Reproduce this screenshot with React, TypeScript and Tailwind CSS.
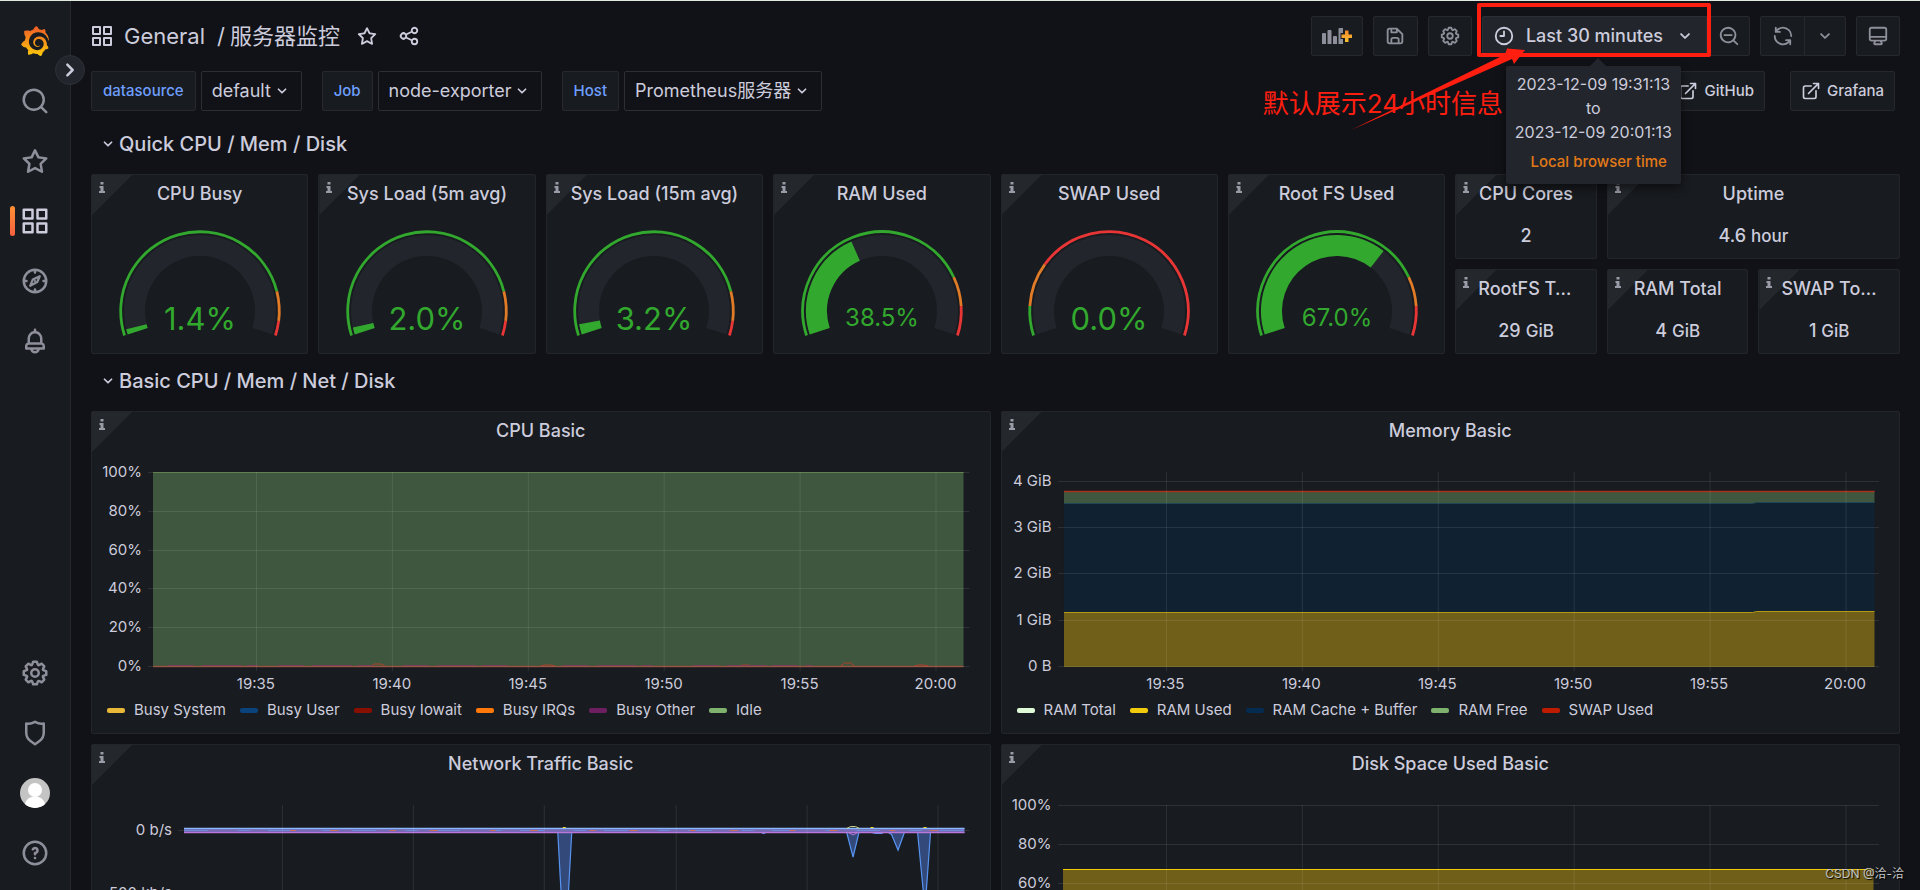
import type { ReactNode } from 'react'
import { SiGrafana } from 'react-icons/si'

/* ── Icon paths (24x24) ─── */
const ICONS = {
  apps: 'M10,13H3a1,1,0,0,0-1,1v7a1,1,0,0,0,1,1h7a1,1,0,0,0,1-1V14A1,1,0,0,0,10,13ZM9,20H4V15H9ZM21,2H14a1,1,0,0,0-1,1v7a1,1,0,0,0,1,1h7a1,1,0,0,0,1-1V3A1,1,0,0,0,21,2ZM20,9H15V4h5Zm1,4H14a1,1,0,0,0-1,1v7a1,1,0,0,0,1,1h7a1,1,0,0,0,1-1V14A1,1,0,0,0,21,13Zm-1,7H15V15h5ZM10,2H3A1,1,0,0,0,2,3v7a1,1,0,0,0,1,1h7a1,1,0,0,0,1-1V3A1,1,0,0,0,10,2ZM9,9H4V4H9Z',
  search: 'M21.71,20.29,18,16.61A9,9,0,1,0,16.61,18l3.68,3.68a1,1,0,0,0,1.42,0A1,1,0,0,0,21.71,20.29ZM11,18a7,7,0,1,1,7-7A7,7,0,0,1,11,18Z',
  star: 'M22,9.67A1,1,0,0,0,21.14,9l-5.69-.83L12.9,3a1,1,0,0,0-1.8,0L8.55,8.16,2.86,9a1,1,0,0,0-.81.68,1,1,0,0,0,.25,1l4.13,4-1,5.68A1,1,0,0,0,6.9,21.44L12,18.77l5.1,2.67a.93.93,0,0,0,.46.12,1,1,0,0,0,.59-.19,1,1,0,0,0,.4-1l-1-5.68,4.13-4A1,1,0,0,0,22,9.67Zm-6.15,4a1,1,0,0,0-.29.88l.72,4.2-3.76-2a1.06,1.06,0,0,0-.94,0l-3.76,2,.72-4.2a1,1,0,0,0-.29-.88l-3-3,4.21-.61a1,1,0,0,0,.76-.55L12,5.7l1.88,3.82a1,1,0,0,0,.76.55l4.21.61Z',
  bell: 'M18,13.18V10a6,6,0,0,0-5-5.91V3a1,1,0,0,0-2,0V4.09A6,6,0,0,0,6,10v3.18A3,3,0,0,0,4,16v2a1,1,0,0,0,1,1H8.14a4,4,0,0,0,7.72,0H19a1,1,0,0,0,1-1V16A3,3,0,0,0,18,13.18ZM8,10a4,4,0,0,1,8,0v3H8Zm4,10a2,2,0,0,1-1.72-1h3.44A2,2,0,0,1,12,20Zm6-3H6V16a1,1,0,0,1,1-1H17a1,1,0,0,1,1,1Z',
  cog: 'M21.32,9.55l-1.89-.63.89-1.78A1,1,0,0,0,20.13,6L18,3.87a1,1,0,0,0-1.15-.19l-1.78.89-.63-1.89A1,1,0,0,0,13.5,2h-3a1,1,0,0,0-.95.68L8.92,4.57,7.14,3.68A1,1,0,0,0,6,3.87L3.87,6a1,1,0,0,0-.19,1.15l.89,1.78-1.89.63A1,1,0,0,0,2,10.5v3a1,1,0,0,0,.68.95l1.89.63-.89,1.78A1,1,0,0,0,3.87,18L6,20.13a1,1,0,0,0,1.15.19l1.78-.89.63,1.89a1,1,0,0,0,.95.68h3a1,1,0,0,0,.95-.68l.63-1.89,1.78.89A1,1,0,0,0,18,20.13L20.13,18a1,1,0,0,0,.19-1.15l-.89-1.78,1.89-.63A1,1,0,0,0,22,13.5v-3A1,1,0,0,0,21.32,9.55ZM20,12.78l-1.2.4A2,2,0,0,0,17.64,16l.57,1.14-1.1,1.1L16,17.64a2,2,0,0,0-2.79,1.16l-.4,1.2H11.22l-.4-1.2A2,2,0,0,0,8,17.64l-1.14.57-1.1-1.1L6.36,16A2,2,0,0,0,5.2,13.18L4,12.78V11.22l1.2-.4A2,2,0,0,0,6.36,8L5.79,6.89l1.1-1.1L8,6.36A2,2,0,0,0,10.82,5.2l.4-1.2h1.56l.4,1.2A2,2,0,0,0,16,6.36l1.14-.57,1.1,1.1L17.64,8a2,2,0,0,0,1.16,2.79l1.2.4ZM12,8a4,4,0,1,0,4,4A4,4,0,0,0,12,8Zm0,6a2,2,0,1,1,2-2A2,2,0,0,1,12,14Z',
  shield: 'M19.63,3.65a1,1,0,0,0-.84-.2,8,8,0,0,1-6.22-1.27,1,1,0,0,0-1.14,0A8,8,0,0,1,5.21,3.45a1,1,0,0,0-.84.2A1,1,0,0,0,4,4.43v7.45a9,9,0,0,0,3.77,7.33l3.65,2.6a1,1,0,0,0,1.16,0l3.65-2.6A9,9,0,0,0,20,11.88V4.43A1,1,0,0,0,19.63,3.65ZM18,11.88a7,7,0,0,1-2.93,5.7L12,19.77,8.93,17.58A7,7,0,0,1,6,11.88V5.58a10,10,0,0,0,6-1.39,10,10,0,0,0,6,1.39Z',
  help: 'M11.29,15.29a1.58,1.58,0,0,0-.12.15.76.76,0,0,0-.09.18.64.64,0,0,0-.06.18,1.36,1.36,0,0,0,0,.2.84.84,0,0,0,.08.38.9.9,0,0,0,.54.54.94.94,0,0,0,.76,0,.9.9,0,0,0,.54-.54A1,1,0,0,0,13,16a1,1,0,0,0-.29-.71A1,1,0,0,0,11.29,15.29ZM12,2A10,10,0,1,0,22,12,10,10,0,0,0,12,2Zm0,18a8,8,0,1,1,8-8A8,8,0,0,1,12,20ZM12,7A3,3,0,0,0,9.4,8.5a1,1,0,1,0,1.73,1A1,1,0,0,1,12,9a1,1,0,0,1,0,2,1,1,0,0,0-1,1v1a1,1,0,0,0,2,0v-.18A3,3,0,0,0,12,7Z',
  share: 'M18,14a4,4,0,0,0-3.08,1.48l-5.1-2.35a3.64,3.64,0,0,0,0-2.26l5.1-2.35A4,4,0,1,0,14,6a4.17,4.17,0,0,0,.07.71L8.79,9.14a4,4,0,1,0,0,5.72l5.28,2.43A4.17,4.17,0,0,0,14,18a4,4,0,1,0,4-4ZM18,4a2,2,0,1,1-2,2A2,2,0,0,1,18,4ZM6,14a2,2,0,1,1,2-2A2,2,0,0,1,6,14Zm12,6a2,2,0,1,1,2-2A2,2,0,0,1,18,20Z',
  save: 'M20.71,9.29l-6-6a1,1,0,0,0-.32-.21A1.09,1.09,0,0,0,14,3H6A3,3,0,0,0,3,6V18a3,3,0,0,0,3,3H18a3,3,0,0,0,3-3V10A1,1,0,0,0,20.71,9.29ZM9,5h4V7H9Zm6,14H9V16a1,1,0,0,1,1-1h4a1,1,0,0,1,1,1Zm4-1a1,1,0,0,1-1,1H17V16a3,3,0,0,0-3-3H10a3,3,0,0,0-3,3v3H6a1,1,0,0,1-1-1V6A1,1,0,0,1,6,5H7V8A1,1,0,0,0,8,9h6a1,1,0,0,0,1-1V6.41l4,4Z',
  clock: 'M12,2A10,10,0,1,0,22,12,10,10,0,0,0,12,2Zm0,18a8,8,0,1,1,8-8A8,8,0,0,1,12,20ZM12,6a1,1,0,0,0-1,1v4H8a1,1,0,0,0,0,2h4a1,1,0,0,0,1-1V7A1,1,0,0,0,12,6Z',
  down: 'M17,9.17a1,1,0,0,0-1.41,0L12,12.71,8.46,9.17a1,1,0,0,0-1.41,0,1,1,0,0,0,0,1.42l4.24,4.24a1,1,0,0,0,1.42,0L17,10.59A1,1,0,0,0,17,9.17Z',
  right: 'M14.83,11.29,10.59,7.05a1,1,0,0,0-1.42,0,1,1,0,0,0,0,1.41L12.71,12,9.17,15.54a1,1,0,0,0,0,1.41,1,1,0,0,0,.71.29,1,1,0,0,0,.71-.29l4.24-4.24A1,1,0,0,0,14.83,11.29Z',
  zoomOut: 'M21.71,20.29,18,16.61A9,9,0,1,0,16.61,18l3.68,3.68a1,1,0,0,0,1.42,0A1,1,0,0,0,21.71,20.29ZM11,18a7,7,0,1,1,7-7A7,7,0,0,1,11,18Zm4-8H7a1,1,0,0,0,0,2h8a1,1,0,0,0,0-2Z',
  sync: 'M19.91,15.51H15.38a1,1,0,0,0,0,2h2.4A8,8,0,0,1,4,12a1,1,0,0,0-2,0,10,10,0,0,0,16.88,7.23V21a1,1,0,0,0,2,0V16.5A1,1,0,0,0,19.91,15.51ZM12,2A10,10,0,0,0,5.12,4.77V3a1,1,0,0,0-2,0V7.5a1,1,0,0,0,1,1h4.5a1,1,0,0,0,0-2H6.22A8,8,0,0,1,20,12a1,1,0,0,0,2,0A10,10,0,0,0,12,2Z',
  monitor: 'M19,2H5A3,3,0,0,0,2,5V15a3,3,0,0,0,3,3H7.64l-.58,1a2,2,0,0,0,0,2,2,2,0,0,0,1.75,1h6.46A2,2,0,0,0,17,21a2,2,0,0,0,0-2l-.59-1H19a3,3,0,0,0,3-3V5A3,3,0,0,0,19,2ZM8.77,20,10,18H14l1.2,2ZM20,15a1,1,0,0,1-1,1H5a1,1,0,0,1-1-1V14H20Zm0-3H4V5A1,1,0,0,1,5,4H19a1,1,0,0,1,1,1Z',
  external: 'M18,10.82a1,1,0,0,0-1,1V19a1,1,0,0,1-1,1H5a1,1,0,0,1-1-1V8A1,1,0,0,1,5,7h7.18a1,1,0,0,0,0-2H5A3,3,0,0,0,2,8V19a3,3,0,0,0,3,3H16a3,3,0,0,0,3-3V11.82A1,1,0,0,0,18,10.82Zm3.92-8.2a1,1,0,0,0-.54-.54A1,1,0,0,0,21,2H15a1,1,0,0,0,0,2h3.59L8.29,14.29a1,1,0,0,0,0,1.42,1,1,0,0,0,1.42,0L20,5.41V9a1,1,0,0,0,2,0V3A1,1,0,0,0,21.92,2.62Z',
}

const GREEN = '#32a82e'
const ORANGE = '#e07b28'
const RED = '#e83636'
const GRID = 'rgba(225,235,225,0.11)'

function Icon({ name, className }: { name: keyof typeof ICONS; className: string }) {
  return (
    <svg viewBox="0 0 24 24" fill="currentColor" className={`shrink-0 ${className}`} aria-hidden="true">
      <path d={ICONS[name]} />
    </svg>
  )
}

function CompassIcon() {
  return (
    <svg viewBox="0 0 24 24" fill="none" stroke="currentColor" strokeWidth="2" strokeLinecap="round" strokeLinejoin="round" className="size-[30px]" aria-hidden="true">
      <circle cx="12" cy="12" r="9" />
      <path d="M12 3.5v1.7M12 18.8v1.7M3.5 12h1.7M18.8 12h1.7" />
      <path d="M15.8 8.2l-2 4.6-5.6 3 2-4.9z" strokeWidth="1.8" />
      <circle cx="12" cy="12" r="0.4" strokeWidth="1" />
    </svg>
  )
}

function AddPanelIcon() {
  return (
    <svg viewBox="0 0 30 20" className="h-5 w-[30px]" aria-hidden="true">
      <defs>
        <linearGradient id="plus" x1="0" y1="0" x2="0" y2="1">
          <stop offset="0" stopColor="#f58a2c" />
          <stop offset="1" stopColor="#fbc02d" />
        </linearGradient>
      </defs>
      <g fill="#8e8f9a">
        <path d="M0 8a1 1 0 0 1 1-1h2a1 1 0 0 1 1 1v10H0zM5.500 5a1 1 0 0 1 1-1h2a1 1 0 0 1 1 1v13h-4zM11 11a1 1 0 0 1 1-1h2a1 1 0 0 1 1 1v7h-4z" />
        <path d="M16.500 3a1 1 0 0 1 1-1H21v5h-2.500v6H21v5h-4.500z" />
      </g>
      <path d="M23 4.500h3.500v4H30v3.500h-3.500v4H23v-4h-3.500V8.500H23z" fill="url(#plus)" />
    </svg>
  )
}

/* ── Sidebar ─── */
function NavItem({ label, active, children }: { label: string; active?: boolean; children: ReactNode }) {
  return (
    <a
      href="#"
      aria-label={label}
      className={`relative flex h-[60px] items-center justify-center ${active ? 'text-[#ccccdc]' : 'text-[#8e8f9a]'}`}
    >
      {active && (
        <span className="absolute left-2.5 h-[30px] w-[5px] rounded-sm bg-linear-to-b from-[#ff9033] to-[#f55f3e]" />
      )}
      {children}
    </a>
  )
}

function Sidebar() {
  return (
    <nav className="relative z-10 flex w-[71px] shrink-0 flex-col justify-between border-r border-[#26282d] bg-[#181b1f] pt-2.5 pb-[7px]">
      <svg className="absolute size-0" aria-hidden="true">
        <linearGradient id="brand" x1="0" y1="0" x2="0" y2="1">
          <stop offset="0" stopColor="#f05a28" />
          <stop offset="1" stopColor="#fbca0a" />
        </linearGradient>
      </svg>
      <div>
        <NavItem label="Home">
          <SiGrafana fill="url(#brand)" className="size-[30px]" />
        </NavItem>
        <NavItem label="Search"><Icon name="search" className="size-[30px]" /></NavItem>
        <NavItem label="Starred"><Icon name="star" className="size-[30px]" /></NavItem>
        <NavItem label="Dashboards" active><Icon name="apps" className="size-[30px]" /></NavItem>
        <NavItem label="Explore"><CompassIcon /></NavItem>
        <NavItem label="Alerting"><Icon name="bell" className="size-[30px]" /></NavItem>
      </div>
      <div>
        <NavItem label="Configuration"><Icon name="cog" className="size-[30px]" /></NavItem>
        <NavItem label="Server admin"><Icon name="shield" className="size-[30px]" /></NavItem>
        <NavItem label="Profile">
          <svg viewBox="0 0 30 30" className="size-[30px] rounded-full" aria-hidden="true">
            <rect width="30" height="30" fill="#c4c4c4" />
            <circle cx="15" cy="12" r="7" fill="#fff" />
            <path d="M4 30c1-8 5-11.500 11-11.500S25 22 26 30z" fill="#fff" />
          </svg>
        </NavItem>
        <NavItem label="Help"><Icon name="help" className="size-[30px]" /></NavItem>
      </div>
      <button
        aria-label="Expand menu"
        className="absolute top-[54px] -right-[15px] flex size-[30px] items-center justify-center rounded-full border border-[#2d3036] bg-[#22252b] text-[#ccccdc]"
      >
        <Icon name="right" className="size-[30px]" />
      </button>
    </nav>
  )
}

/* ── Header ─── */
const TOOL = 'flex h-10 items-center justify-center border border-[#26282d] bg-[#181b1f] text-[#8e8f9a]'

function TimePicker() {
  return (
    <div className="relative z-20">
      <button className="flex h-10 items-center rounded-l-xs border border-[#2b2e34] bg-[#22252b] px-2.5 text-lg font-medium text-[#ccccdc]">
        <Icon name="clock" className="mr-[11px] size-[22px]" />
        Last 30 minutes
        <Icon name="down" className="ml-[11px] size-[22px]" />
      </button>

      {/* Range tooltip */}
      <div className="absolute top-[50px] left-6 h-[118px] w-[175px] rounded-xs bg-[#22252b] pt-1.5 text-center text-base leading-6 text-[#ccccdc] shadow-[0_4px_10px_rgba(0,0,0,0.5)]">
        <span className="absolute -top-2 left-[83px] size-0 border-x-[9px] border-b-[9px] border-x-transparent border-b-[#22252b]" />
        <div>2023-12-09 19:31:13</div>
        <div>to</div>
        <div>2023-12-09 20:01:13</div>
        <div className="mt-1.5 pr-3.5 text-right text-[15px] font-medium text-[#e27a18]">Local browser time</div>
      </div>

      {/* Red annotation */}
      <div className="pointer-events-none absolute -top-[13px] -right-1 -bottom-px -left-[5px] rounded-xs border-4 border-[#ff1e10]" />
      <p className="pointer-events-none absolute top-[68px] right-[204px] text-[26px] leading-10 whitespace-nowrap text-[#ff1e10]">
        默认展示24小时信息
      </p>
      <svg viewBox="0 0 174 82" className="pointer-events-none absolute top-8 -left-[131px] h-[82px] w-[174px]" aria-hidden="true">
        <path d="M0 82L154 6.500L156 0.500L174 2L163 16L161 11Z" fill="#ff1e10" />
      </svg>
    </div>
  )
}

function Header() {
  return (
    <header className="flex items-center justify-between pt-[15px] pr-5 pl-5">
      <div className="flex items-center text-[22px] text-[#ccccdc]">
        <Icon name="apps" className="mr-2.5 -ml-px size-6" />
        <a href="#">General</a>
        <span className="ml-3 mr-[5px]">/</span>
        <a href="#">服务器监控</a>
        <button aria-label="Mark as favorite" className="ml-4"><Icon name="star" className="size-[22px]" /></button>
        <button aria-label="Share dashboard" className="ml-5"><Icon name="share" className="size-[22px]" /></button>
      </div>
      <div className="flex items-center gap-2.5">
        <button aria-label="Add panel" className={`${TOOL} w-[52px] rounded-xs`}><AddPanelIcon /></button>
        <button aria-label="Save dashboard" className={`${TOOL} w-[45px] rounded-xs`}><Icon name="save" className="size-[22px]" /></button>
        <button aria-label="Dashboard settings" className={`${TOOL} w-11 rounded-xs`}><Icon name="cog" className="size-[22px]" /></button>
        <div className="flex">
          <TimePicker />
          <button aria-label="Zoom out" className={`${TOOL} w-[43px] rounded-r-xs`}><Icon name="zoomOut" className="size-[22px]" /></button>
        </div>
        <div className="flex">
          <button aria-label="Refresh" className={`${TOOL} w-[45px] rounded-l-xs`}><Icon name="sync" className="size-[22px]" /></button>
          <button aria-label="Refresh interval" className={`${TOOL} w-[41px] rounded-r-xs border-l-0`}><Icon name="down" className="size-[22px]" /></button>
        </div>
        <button aria-label="Cycle view mode" className={`${TOOL} w-11 rounded-xs`}><Icon name="monitor" className="size-[22px]" /></button>
      </div>
    </header>
  )
}

/* ── Variables ─── */
const VARIABLES = [
  { id: 'datasource', value: 'default' },
  { id: 'Job', value: 'node-exporter' },
  { id: 'Host', value: 'Prometheus服务器' },
]

function Variables() {
  return (
    <div className="flex justify-between pt-[15px] pr-[25px] pl-5">
      <div className="flex gap-5">
        {VARIABLES.map((v) => (
          <div key={v.id} className="flex gap-[5px]">
            <label
              htmlFor={v.id}
              className="flex h-10 items-center rounded-xs border border-[#26282d] bg-[#181b1f] px-[11px] text-[15px] font-medium text-[#6e9fff]"
            >
              {v.id}
            </label>
            <div className="relative text-[#ccccdc]">
              <select
                id={v.id}
                className="h-10 appearance-none rounded-xs border border-[#2d2e34] bg-[#111217] pr-[29px] pl-2.5 text-lg"
              >
                <option>{v.value}</option>
              </select>
              <Icon name="down" className="pointer-events-none absolute top-2.5 right-2.5 size-5" />
            </div>
          </div>
        ))}
      </div>
      <div className="flex gap-[25px] text-[15px] font-medium text-[#ccccdc]">
        {['GitHub', 'Grafana'].map((name) => (
          <a key={name} href="#" className="flex h-10 items-center gap-1.5 rounded-xs border border-[#26282d] bg-[#181b1f] px-2.5">
            <Icon name="external" className="size-5" />
            {name}
          </a>
        ))}
      </div>
    </div>
  )
}

/* ── Panel ─── */
function Panel({ title, className, children }: { title: string; className: string; children: ReactNode }) {
  return (
    <section className={`relative flex min-w-0 flex-col rounded-xs border border-[#222529] bg-[#181b1f] ${className}`}>
      <div className="absolute top-0 left-0 size-10 bg-[#24282d] text-[#9a9ba6] [clip-path:polygon(0_0,100%_0,0_100%)]">
        <svg viewBox="0 0 6 11" fill="currentColor" className="mt-[7px] ml-[7px] h-[11px] w-1.5" aria-hidden="true">
          <path d="M1.500 0h3v2.500h-3zM0.500 4h4v5H6v2H0V9h1.500V6h-1z" />
        </svg>
      </div>
      <h2 className="relative h-10 truncate px-[22px] text-center text-lg leading-[38px] font-medium text-[#ccccdc]">{title}</h2>
      {children}
    </section>
  )
}

function RowTitle({ children }: { children: ReactNode }) {
  return (
    <button className="flex h-[37px] items-center pb-[3px] pl-[7px] text-xl font-medium text-[#ccccdc]">
      <Icon name="down" className="mr-px size-5" />
      {children}
    </button>
  )
}

/* ── Gauge ─── */
type GaugeData = { title: string; value: number; warn: number; crit: number }

const GAUGES: GaugeData[] = [
  { title: 'CPU Busy', value: 1.4, warn: 85, crit: 95 },
  { title: 'Sys Load (5m avg)', value: 2, warn: 85, crit: 95 },
  { title: 'Sys Load (15m avg)', value: 3.2, warn: 85, crit: 95 },
  { title: 'RAM Used', value: 38.5, warn: 80, crit: 90 },
  { title: 'SWAP Used', value: 0, warn: 10, crit: 25 },
  { title: 'Root FS Used', value: 67, warn: 80, crit: 90 },
]

// The dial sweeps 216 degrees, starting 18 degrees below the horizontal
function arc(r: number, from: number, to: number): string {
  const point = (pct: number) => {
    const a = ((162 + pct * 2.16) * Math.PI) / 180
    return `${(82 + r * Math.cos(a)).toFixed(2)} ${(82 + r * Math.sin(a)).toFixed(2)}`
  }
  return `M${point(from)}A${r} ${r} 0 ${(to - from) * 2.16 > 180 ? 1 : 0} 1 ${point(to)}`
}

function Gauge({ value, warn, crit }: GaugeData) {
  const text = `${value.toFixed(1)}%`
  return (
    <div className="flex flex-1 items-center justify-center">
      <svg viewBox="0 0 164 110" className="h-[110px] w-[164px]" fill="none">
        <path d={arc(65.5, 0, 100)} stroke="#22252b" strokeWidth="21" />
        {value > 0 && <path d={arc(65.5, 0, value + 0.5)} stroke={GREEN} strokeWidth="21" />}
        <path d={arc(79.3, 0, warn)} stroke={GREEN} strokeWidth="2.8" />
        <path d={arc(79.3, warn, crit)} stroke={ORANGE} strokeWidth="2.8" />
        <path d={arc(79.3, crit, 100)} stroke={RED} strokeWidth="2.8" />
        <text
          x="82"
          y={text.length > 4 ? 97 : 101}
          fill={GREEN}
          textAnchor="middle"
          className={text.length > 4 ? 'text-2xl' : 'text-[31px]'}
        >
          {text}
        </text>
      </svg>
    </div>
  )
}

/* ── Stats ─── */
const STATS = [
  { title: 'CPU Cores', value: '2', unit: '', span: 'col-span-2' },
  { title: 'Uptime', value: '4.6', unit: 'hour', span: 'col-span-4' },
  { title: 'RootFS Total', value: '29', unit: 'GiB', span: 'col-span-2' },
  { title: 'RAM Total', value: '4', unit: 'GiB', span: 'col-span-2' },
  { title: 'SWAP Total', value: '1', unit: 'GiB', span: 'col-span-2' },
]

/* ── Charts ─── */
type Tick = { label: string; y: number }

const PLOT_H = 199

const TIME_TICKS = [
  { label: '19:35', x: 108 },
  { label: '19:40', x: 244 },
  { label: '19:45', x: 380 },
  { label: '19:50', x: 516 },
  { label: '19:55', x: 652 },
  { label: '20:00', x: 788 },
]

type ChartProps = {
  width: number
  yTicks: Tick[]
  xTicks: { label: string; x: number }[]
  wideAxis?: boolean
  children: ReactNode
}

function Chart({ width, yTicks, xTicks, wideAxis, children }: ChartProps) {
  return (
    <div className="mt-5 flex pr-5 text-[15px] leading-5 text-[#ccccdc]">
      <div className={`relative shrink-0 ${wideAxis ? 'w-[86px]' : 'w-14'}`}>
        {yTicks.map((t) => (
          <span key={t.label} className="absolute right-1.5 -mt-2.5 whitespace-nowrap" style={{ top: t.y }}>
            {t.label}
          </span>
        ))}
      </div>
      <div className="min-w-0 flex-1">
        <svg viewBox={`0 0 ${width} ${PLOT_H}`} preserveAspectRatio="none" className="block h-[199px] w-full">
          {children}
          <g stroke={GRID} shapeRendering="crispEdges">
            {yTicks.map((t) => (
              <path key={t.label} d={`M0 ${t.y + 0.5}H${width}`} />
            ))}
            {xTicks.map((t) => (
              <path key={t.x} d={`M${t.x + 0.5} 0V${PLOT_H}`} />
            ))}
          </g>
        </svg>
        <div className="relative h-[26px]">
          {xTicks.map((t) => (
            <span key={t.x} className="absolute top-[3px] -translate-x-1/2" style={{ left: `${(t.x / width) * 100}%` }}>
              {t.label}
            </span>
          ))}
        </div>
      </div>
    </div>
  )
}

function Legend({ items }: { items: [string, string][] }) {
  return (
    <ul className="flex h-[26px] items-center gap-3.5 pl-[15px] text-[15px] text-[#ccccdc]">
      {items.map(([label, color]) => (
        <li key={label} className="flex items-center gap-[9px]">
          <span className="h-[5px] w-[18px] rounded-xs" style={{ background: color }} />
          {label}
        </li>
      ))}
    </ul>
  )
}

function CpuChart() {
  const yTicks = [100, 80, 60, 40, 20, 0].map((p) => ({ label: `${p}%`, y: Math.round(194 - p * 1.94) }))
  const bumps = [[230, 2], [400, 1], [598, 1], [700, 3], [774, 1]]
  return (
    <Chart width={822} yTicks={yTicks} xTicks={TIME_TICKS}>
      <rect x="5" y="0" width="811" height="195" fill="#3e573e" />
      <path d="M5 0.500H816" stroke="#52753f" />
      <path d="M5 194.500H816" stroke="#8f4634" strokeWidth="1.500" />
      {bumps.map(([x, h]) => (
        <path key={x} d={`M${x - 7} 194L${x - 3} ${194 - h}H${x + 3}L${x + 7} 194`} stroke="#b0402c" fill="none" />
      ))}
      <path d="M20 193.500h90m20 0h95m30 0h110m50 0h90m40 0h120" stroke="#7a3f58" strokeDasharray="26 8 40 5" />
    </Chart>
  )
}

function MemoryChart() {
  const yTicks = [
    { label: '4 GiB', y: 9 },
    { label: '3 GiB', y: 55 },
    { label: '2 GiB', y: 101 },
    { label: '1 GiB', y: 148 },
    { label: '0 B', y: 194 },
  ]
  return (
    <Chart width={822} yTicks={yTicks} xTicks={TIME_TICKS}>
      <path d="M6 19H817V31H6Z" fill="#3e573e" />
      <path d="M6 31.500H695L699 30.500H817V140H6Z" fill="#102132" />
      <path d="M6 140.500H695L699 139.500H817V195H6Z" fill="#6f5f18" />
      <path d="M6 19.500H817" stroke="#a8321c" strokeWidth="1.500" />
      <path d="M6 31.500H695L699 30.500H817" stroke="#1d4656" fill="none" />
      <path d="M6 140.500H695L699 139.500H817" stroke="#b39a16" fill="none" />
    </Chart>
  )
}

function NetworkChart() {
  const xTicks = [104, 235, 366, 498, 629, 760].map((x) => ({ label: '', x }))
  return (
    <Chart width={792} wideAxis yTicks={[{ label: '0 b/s', y: 25 }, { label: '-500 kb/s', y: 88 }]} xTicks={xTicks}>
      <g fill="#33497a" stroke="#5794f2" strokeWidth="1.200">
        <path d="M380 27L387 155L394 27" />
        <path d="M669 27L675.500 52L681.500 27" />
        <path d="M692 27L698 28.500H704L707 27" />
        <path d="M710 27L714 29.500L720.500 45L727 27" />
        <path d="M740 27L747.500 104L753 27" />
        <path d="M583 27L586 28.500L589 27" />
      </g>
      <path d="M6 23H787V28H6Z" fill="#6a5fae" />
      <path d="M6 23.500H787" stroke="#8ab8ff" strokeWidth="1.500" />
      <path d="M6 25.500H787" stroke="#5d83d6" strokeDasharray="24 30 12 18" />
      <path d="M112 25.500H787" stroke="#c4664c" strokeDasharray="6 34 8 52" />
      <path d="M6 27.500H787" stroke="#b877d9" strokeWidth="1.300" />
      <path d="M669 23.500L673 21.500H678L682 23.500" stroke="#c5d08a" fill="none" />
      <path d="M385 22.500h3m305 0h3m50 0h3" stroke="#fade2a" />
      <path d="M670 27L675.500 30L681 27" stroke="#b877d9" fill="none" />
    </Chart>
  )
}

function DiskChart() {
  const yTicks = [
    { label: '100%', y: 0 },
    { label: '80%', y: 39 },
    { label: '60%', y: 78 },
  ]
  return (
    <Chart width={822} yTicks={yTicks} xTicks={TIME_TICKS.map((t) => ({ label: '', x: t.x }))}>
      <rect x="5" y="64" width="811" height="131" fill="#6f5f18" />
      <path d="M5 64.500H816" stroke="#f2cc0c" />
    </Chart>
  )
}

/* ── Page ─── */
export default function App() {
  return (
    <div className="relative flex h-screen overflow-hidden border-t border-[#dfe8df] bg-[#111217] font-['Inter','Noto_Sans_CJK_SC',sans-serif]">
      <Sidebar />
      <main className="min-w-0 flex-1">
        <Header />
        <Variables />

        <div className="flex flex-col gap-2.5 pt-4 pr-5 pl-5">
          <RowTitle>Quick CPU / Mem / Disk</RowTitle>
          <div className="grid grid-cols-24 grid-rows-[85px_85px] gap-2.5">
            {GAUGES.map((g) => (
              <Panel key={g.title} title={g.title} className="col-span-3 row-span-2">
                <Gauge {...g} />
              </Panel>
            ))}
            {STATS.map((s) => (
              <Panel key={s.title} title={s.title} className={s.span}>
                <p className="flex flex-1 items-baseline justify-center gap-[5px] pt-[7px] text-lg font-medium text-[#ccccdc]">
                  {s.value}
                  {s.unit && <span className="text-[17px]">{s.unit}</span>}
                </p>
              </Panel>
            ))}
          </div>

          <RowTitle>Basic CPU / Mem / Net / Disk</RowTitle>
          <div className="grid grid-cols-2 gap-2.5">
            <Panel title="CPU Basic" className="h-[323px]">
              <CpuChart />
              <Legend
                items={[
                  ['Busy System', '#eab839'],
                  ['Busy User', '#0a437c'],
                  ['Busy Iowait', '#890f02'],
                  ['Busy IRQs', '#ff780a'],
                  ['Busy Other', '#6d1f62'],
                  ['Idle', '#7eb26d'],
                ]}
              />
            </Panel>
            <Panel title="Memory Basic" className="h-[323px]">
              <MemoryChart />
              <Legend
                items={[
                  ['RAM Total', '#e0f9d7'],
                  ['RAM Used', '#f2cc0c'],
                  ['RAM Cache + Buffer', '#052b51'],
                  ['RAM Free', '#7eb26d'],
                  ['SWAP Used', '#bf1b00'],
                ]}
              />
            </Panel>
            <Panel title="Network Traffic Basic" className="h-[323px]">
              <NetworkChart />
            </Panel>
            <Panel title="Disk Space Used Basic" className="h-[323px]">
              <DiskChart />
            </Panel>
          </div>
        </div>
      </main>

      <p className="absolute right-4 bottom-1.5 text-xs leading-5 text-[#c4c4c4] [text-shadow:1px_1px_1px_#000]">CSDN @洽-洽</p>
    </div>
  )
}
